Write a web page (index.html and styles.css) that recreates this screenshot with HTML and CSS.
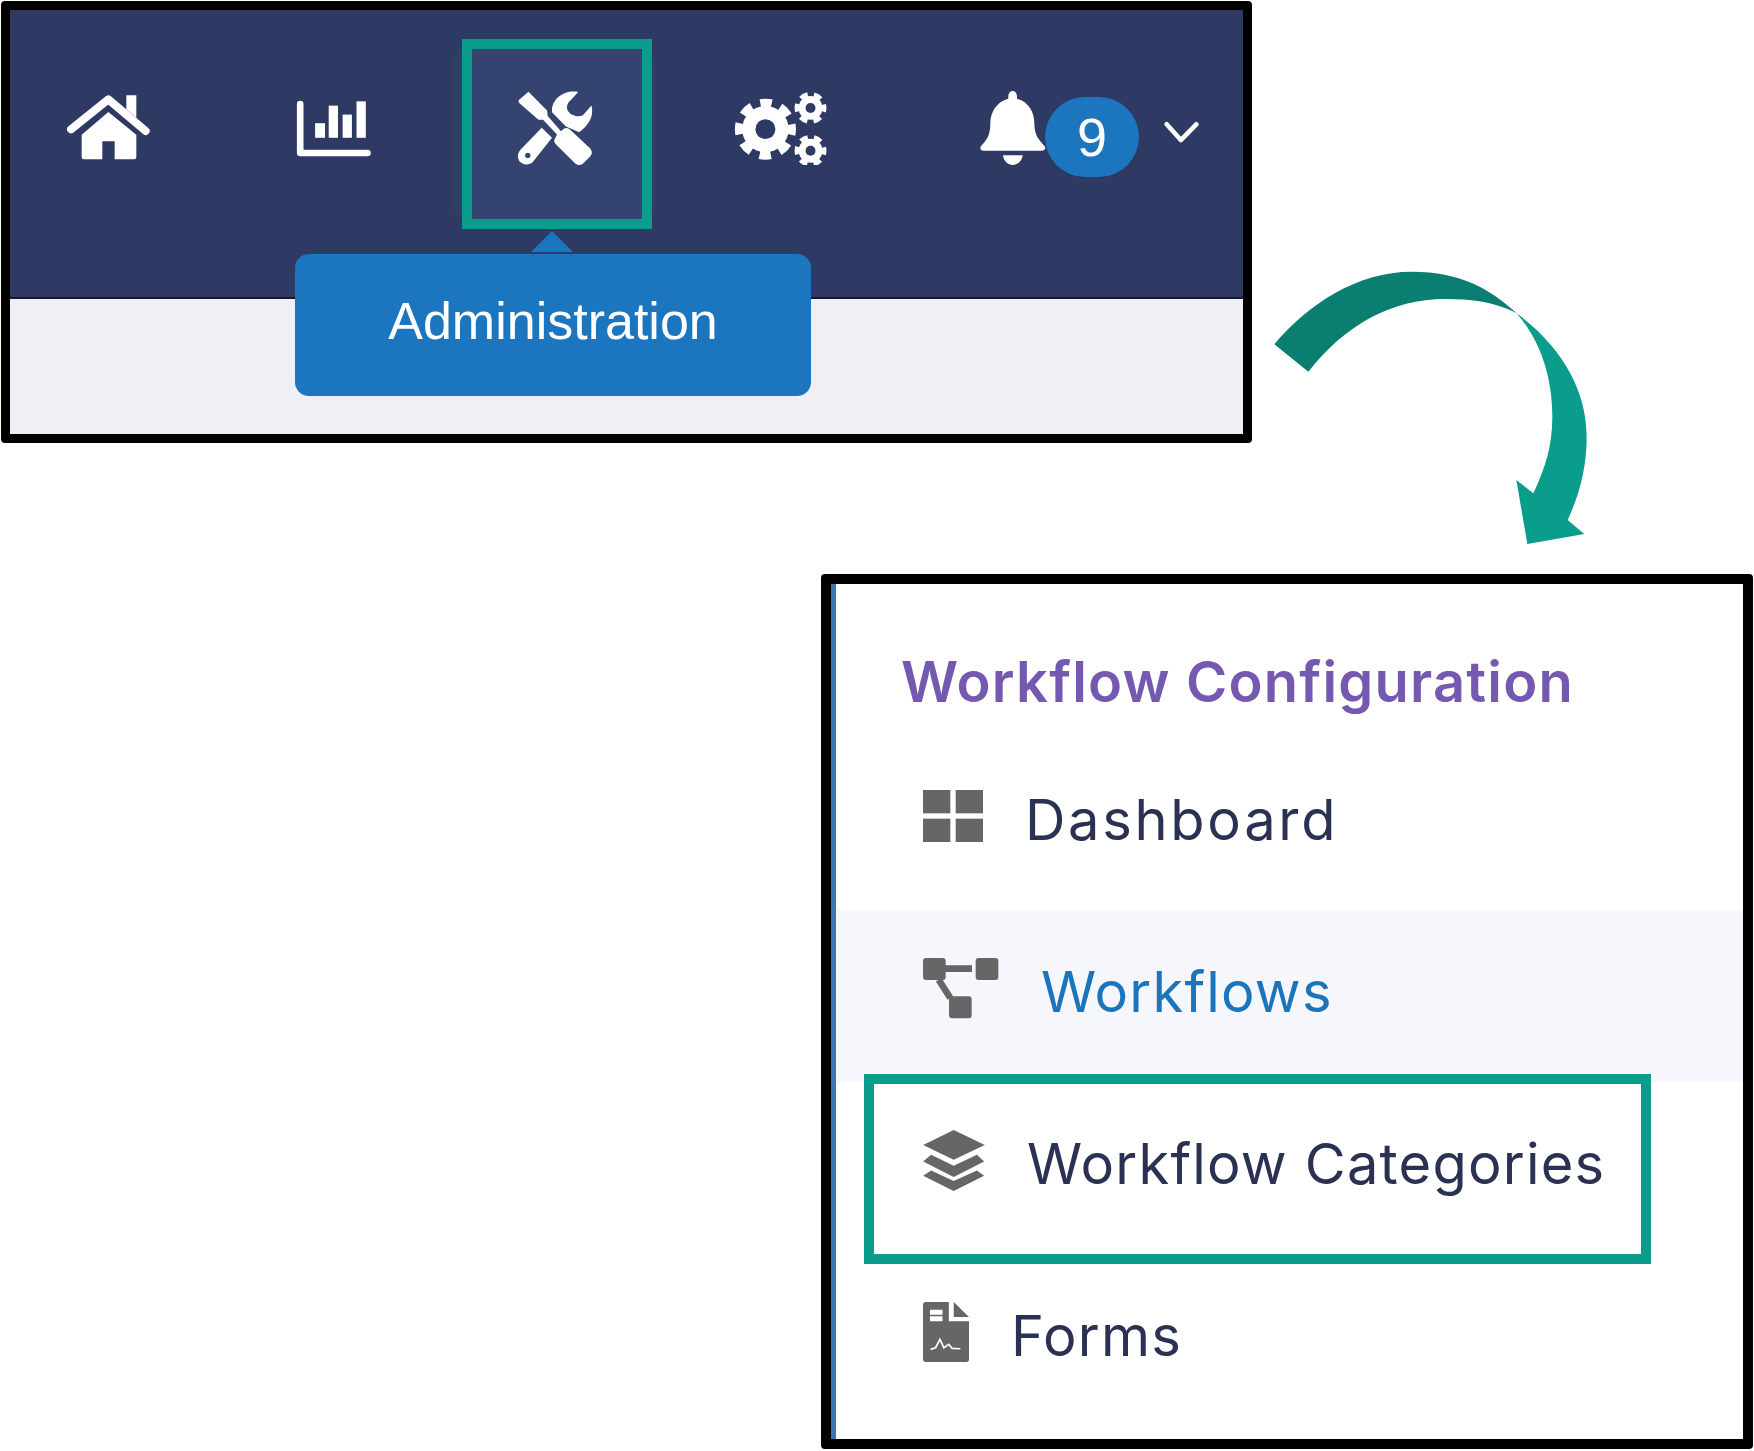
FILE: index.html
```html
<!DOCTYPE html>
<html>

<head>
    <link rel="stylesheet" href="styles.css">
</head>

<body>
    <div class="topbar-shot">
        <div class="nav">
            <div class="nav-item">
                <svg class="icon-home" viewBox="54 44 252 204">
                    <path d="M232 48H262V115L232 90Z" fill="#fff" />
                    <path d="M66 150L178 60L290 155" fill="none" stroke="#fff" stroke-width="24" stroke-linecap="round" stroke-linejoin="round" />
                    <path d="M178 98L262 166V234Q262 240 256 240H197V186H160V240H104Q98 240 98 234V166Z" fill="#fff" />
                </svg>
            </div>
            <div class="nav-item">
                <svg class="icon-chart" viewBox="740 58 228 172">
                    <path d="M752 70V218H955" fill="none" stroke="#fff" stroke-width="20" stroke-linecap="round" stroke-linejoin="round" />
                    <rect x="797" y="128" width="30" height="44" fill="#fff" />
                    <rect x="838" y="75" width="28" height="97" fill="#fff" />
                    <rect x="880" y="102" width="28" height="70" fill="#fff" />
                    <rect x="922" y="62" width="28" height="110" fill="#fff" />
                </svg>
            </div>
            <div class="nav-item active">
                <div class="frame"></div>
                <svg class="icon-tools" viewBox="198 181 228 226">
                    <path d="M232 183L204 207Q200 212 205 218L262 268L276 268L318 312L310 328Q308 335 315 342L374 400Q385 408 396 400L418 378Q428 366 418 354L358 298Q350 290 340 294L330 302L290 256L288 240Z" fill="#fff" />
                    <path d="M382 184C340 176 300 205 303 245L345 288L385 305C412 285 430 260 422 225L396 254C380 262 360 255 350 240C345 228 350 215 360 208Z" fill="#fff" />
                    <path d="M272 292L303 322L245 395C235 405 215 405 205 393C197 380 200 368 208 358Z" fill="#fff" />
                    <circle cx="230" cy="375" r="8" fill="#34436f" />
                </svg>
                <div class="tooltip">Administration</div>
            </div>
            <div class="nav-item gears">
                <svg class="icon-gears" viewBox="28 30 282 220">
                    <circle cx="122" cy="142" r="70" fill="#fff" />
                    <circle cx="122" cy="142" r="79" fill="none" stroke="#fff" stroke-width="26" pathLength="80" stroke-dasharray="5.6 4.4" stroke-dashoffset="2.8" />
                    <circle cx="122" cy="142" r="30" fill="#2e3a63" />
                    <circle cx="258" cy="78" r="36" fill="#fff" />
                    <circle cx="258" cy="78" r="41" fill="none" stroke="#fff" stroke-width="14" pathLength="48" stroke-dasharray="4.4 3.6" stroke-dashoffset="2.2" />
                    <circle cx="258" cy="78" r="15" fill="#2e3a63" />
                    <circle cx="258" cy="207" r="36" fill="#fff" />
                    <circle cx="258" cy="207" r="41" fill="none" stroke="#fff" stroke-width="14" pathLength="48" stroke-dasharray="4.4 3.6" stroke-dashoffset="2.2" />
                    <circle cx="258" cy="207" r="15" fill="#2e3a63" />
                </svg>
            </div>
            <div class="notify">
                <svg class="icon-bell" viewBox="26 30 204 228">
                    <path d="M127 33C136 33 141 42 140 56C178 66 192 100 192 130C192 165 205 180 222 197C228 205 224 212 215 212H40C30 212 27 205 33 197C50 180 60 165 60 130C60 100 76 66 114 56C113 42 118 33 127 33Z" fill="#fff" />
                    <path d="M98 226H157C155 245 140 255 127 255C114 255 100 245 98 226Z" fill="#fff" />
                </svg>
                <div class="badge">9</div>
                <svg class="icon-chevron" viewBox="580 120 110 70">
                    <path d="M590 130L633 178L680 130" fill="none" stroke="#fff" stroke-width="14" stroke-linecap="round" stroke-linejoin="round" />
                </svg>
            </div>
        </div>
        <div class="strip"></div>
    </div>

    <svg class="arrow" viewBox="0 0 990 870">
        <path d="M28 253C130 130 280 35 440 35C590 35 680 90 755 160C690 125 620 117 540 117C380 117 240 195 130 335Z" fill="#0a7f71" />
        <path d="M755 160C890 260 965 390 965 530C965 620 945 700 908 780L958 822L787 852L754 660L805 700C840 625 862 560 862 470C862 340 820 235 755 160Z" fill="#0a9d8c" />
    </svg>

    <div class="menu-shot">
        <div class="menu-title">Workflow Configuration</div>

        <div class="menu-row">
            <svg class="icon-dash" viewBox="308 662 180 156">
                <rect x="308" y="662" width="82" height="70" fill="#666" />
                <rect x="406" y="662" width="82" height="70" fill="#666" />
                <rect x="308" y="748" width="82" height="70" fill="#666" />
                <rect x="406" y="748" width="82" height="70" fill="#666" />
            </svg>
            <span class="menu-label dash-label">Dashboard</span>
        </div>

        <div class="menu-row current">
            <svg class="icon-flow" viewBox="308 1165 228 183">
                <path d="M370 1197H455M355 1230L390 1285" stroke="#666" stroke-width="20" fill="none" />
                <rect x="308" y="1165" width="68" height="66" rx="9" fill="#666" />
                <rect x="466" y="1165" width="68" height="66" rx="9" fill="#666" />
                <rect x="386" y="1280" width="68" height="66" rx="9" fill="#666" />
            </svg>
            <span class="menu-label">Workflows</span>
        </div>

        <div class="menu-row">
            <div class="frame wide"></div>
            <svg class="icon-layers" viewBox="306 240 186 184">
                <path d="M398 240L492 285L398 330L306 285Z" fill="#666" />
                <path d="M330 315L398 348L468 315L490 335L398 382L306 335Z" fill="#666" />
                <path d="M330 362L398 394L468 362L490 378L398 424L306 378Z" fill="#666" />
            </svg>
            <span class="menu-label">Workflow Categories</span>
        </div>

        <div class="menu-row">
            <svg class="icon-form" viewBox="307 757 139 181">
                <path d="M315 757H385V815H446V930Q446 938 438 938H315Q307 938 307 930V765Q307 757 315 757Z" fill="#666" />
                <path d="M400 757L446 802H400Z" fill="#666" />
                <path d="M328 780H366V795H328ZM328 800H366V815H328Z" fill="#fff" />
                <path d="M330 900L345 895L358 870L370 895L385 885L395 897L420 898" fill="none" stroke="#fff" stroke-width="5" />
            </svg>
            <span class="menu-label">Forms</span>
        </div>
    </div>
</body>

</html>
```

FILE: styles.css
```css
html {
    background: white;
}

body {
    margin: 0;
    font-family: 'Inter', 'Liberation Sans', sans-serif;
    overflow: hidden;
}

svg {
    display: block;
    flex: none;
}

/* top screenshot */
.topbar-shot {
    box-sizing: border-box;
    width: 1251px;
    height: 442px;
    margin: 1px 0 0 1px;
    border: 9px solid black;
    border-radius: 4px;
    display: flex;
    flex-direction: column;
}

.nav {
    height: 289px;
    box-sizing: border-box;
    padding: 80px 0 0 57px;
    background: #2e3a63;
    border-bottom: 2px solid #14192e;
    display: flex;
    align-items: flex-start;
    gap: 145px;
}

.nav svg {
    filter: blur(0.5px);
}

.strip {
    flex: 1;
    background: #f0eff5;
}

.nav-item {
    height: 76px;
    display: flex;
    align-items: center;
}

.nav-item.active {
    position: relative;
    height: auto;
    padding: 43px 63px 53px 65px;
    margin: -42px -63px -53px -65px;
    background: #303d67;
    border-radius: 14px;
}

.nav-item.gears {
    margin-left: -4px;
}

.icon-home {
    width: 84px;
    height: 68px;
}

.icon-chart {
    width: 76px;
    height: 57px;
}

.icon-tools {
    position: relative;
    width: 76px;
    height: 75px;
}

.icon-gears {
    width: 94px;
    height: 73px;
}

.notify {
    height: 76px;
    margin-left: 6px;
    display: flex;
    align-items: center;
}

.icon-bell {
    width: 68px;
    height: 76px;
}

.badge {
    width: 94px;
    height: 80px;
    margin: 18px 0 0 -2px;
    border-radius: 40px;
    background: #1b75bf;
    color: white;
    font-family: 'Liberation Sans', sans-serif;
    font-size: 54px;
    display: flex;
    align-items: center;
    justify-content: center;
}

.icon-chevron {
    width: 37px;
    height: 23px;
    margin: 8px 0 0 24px;
}

/* teal marker boxes */
.frame {
    position: absolute;
    left: 10px;
    top: -9px;
    box-sizing: border-box;
    width: 190px;
    height: 190px;
    border: 10px solid #0a9d8c;
    background: #34436f;
}

.frame.wide {
    left: 28px;
    top: -8px;
    width: 787px;
    background: none;
}

.tooltip {
    position: absolute;
    left: -157px;
    top: 206px;
    box-sizing: border-box;
    width: 516px;
    height: 142px;
    padding-bottom: 8px;
    border-radius: 14px;
    background: #1b75bf;
    color: white;
    font-family: 'Liberation Sans', sans-serif;
    font-size: 52px;
    display: flex;
    align-items: center;
    justify-content: center;
}

.tooltip::before {
    content: '';
    position: absolute;
    left: 236px;
    top: -23px;
    border: solid transparent;
    border-width: 0 21px 21px;
    border-bottom-color: #1b75bf;
}

.arrow {
    position: absolute;
    left: 1265px;
    top: 260px;
    width: 330px;
    height: 290px;
}

/* bottom screenshot */
.menu-shot {
    box-sizing: border-box;
    width: 932px;
    height: 875px;
    margin: 131px 0 0 821px;
    border: 10px solid black;
    border-radius: 4px;
    box-shadow: inset 5px 0 0 #3a78b5;
    padding-left: 5px;
}

.menu-title {
    height: 154px;
    box-sizing: border-box;
    padding: 66px 0 0 65px;
    color: #7559b1;
    font-size: 56px;
    font-weight: 600;
    line-height: 64px;
    letter-spacing: 1.2px;
}

.menu-row {
    position: relative;
    height: 172px;
    box-sizing: border-box;
    padding: 0 0 16px 87px;
    display: flex;
    align-items: center;
    gap: 42px;
    color: #2a3152;
    font-size: 56px;
}

.menu-row.current {
    background: #f5f7fc;
    color: #1b75bc;
}

.menu-label {
    padding-top: 8px;
    letter-spacing: 1.2px;
}

.menu-label.dash-label {
    letter-spacing: 2.7px;
}

.icon-dash {
    width: 60px;
    height: 52px;
}

.icon-flow {
    width: 76px;
    height: 61px;
}

.icon-layers {
    width: 62px;
    height: 61px;
}

.icon-form {
    width: 46px;
    height: 60px;
}
```
